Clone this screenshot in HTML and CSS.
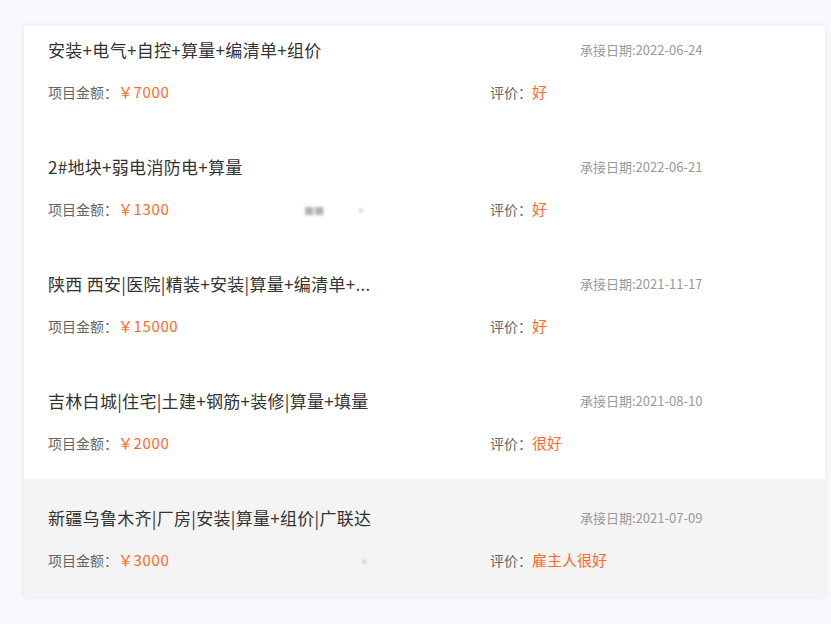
FILE: index.html
```html
<!DOCTYPE html>
<html lang="zh-CN">
<head>
<meta charset="utf-8">
<title>承接项目</title>
<link rel="stylesheet" href="styles.css">
</head>
<body>
<div class="page">
  <div class="card">
    <div class="row">
      <div class="line top">
        <div class="title">安装+电气+自控+算量+编清单+组价</div>
        <div class="date">承接日期:2022-06-24</div>
      </div>
      <div class="line bottom">
        <div class="amount">项目金额：<span class="money">￥7000</span></div>
        <div class="rate">评价：<span class="money">好</span></div>
      </div>
    </div>
    <div class="row">
      <div class="line top">
        <div class="title">2#地块+弱电消防电+算量</div>
        <div class="date">承接日期:2022-06-21</div>
      </div>
      <div class="line bottom">
        <div class="amount">项目金额：<span class="money">￥1300</span><span class="smudge s1">■■</span><span class="smudge s2">▪</span></div>
        <div class="rate">评价：<span class="money">好</span></div>
      </div>
    </div>
    <div class="row">
      <div class="line top">
        <div class="title">陕西 西安|医院|精装+安装|算量+编清单+...</div>
        <div class="date">承接日期:2021-11-17</div>
      </div>
      <div class="line bottom">
        <div class="amount">项目金额：<span class="money">￥15000</span></div>
        <div class="rate">评价：<span class="money">好</span></div>
      </div>
    </div>
    <div class="row">
      <div class="line top">
        <div class="title">吉林白城|住宅|土建+钢筋+装修|算量+填量</div>
        <div class="date">承接日期:2021-08-10</div>
      </div>
      <div class="line bottom">
        <div class="amount">项目金额：<span class="money">￥2000</span></div>
        <div class="rate">评价：<span class="money">很好</span></div>
      </div>
    </div>
    <div class="row active">
      <div class="line top">
        <div class="title">新疆乌鲁木齐|厂房|安装|算量+组价|广联达</div>
        <div class="date">承接日期:2021-07-09</div>
      </div>
      <div class="line bottom">
        <div class="amount">项目金额：<span class="money">￥3000</span><span class="smudge s3">▪</span></div>
        <div class="rate">评价：<span class="money">雇主人很好</span></div>
      </div>
    </div>
  </div>
</div>
</body>
</html>
```

FILE: styles.css
```css
* { box-sizing: border-box; }
html, body { margin: 0; padding: 0; }
body {
  background: #f8f9fc;
  font-family: "Noto Sans CJK SC", "Noto Sans", sans-serif;
  width: 831px;
  height: 624px;
  overflow: hidden;
}
.page {
  padding: 26px 5px 0 24px;
}
.card {
  width: 801px;
  background: #ffffff;
  box-shadow: 0 0 6px rgba(0, 0, 0, 0.09);
}
.row {
  padding: 26px 24px 27px 24px;
}
.row:first-child { padding-top: 11px; }
.row.active {
  background: #f4f4f4;
  padding-bottom: 28px;
}
.line {
  display: grid;
  align-items: center;
}
.line.top {
  grid-template-columns: 532px auto;
  height: 24px;
}
.line.bottom {
  grid-template-columns: 442px auto;
  height: 20px;
  margin-top: 20px;
}
.title {
  font-size: 17px;
  color: #333333;
  white-space: nowrap;
  letter-spacing: 0.3px;
}
.date {
  font-size: 13px;
  color: #999999;
  white-space: nowrap;
}
.amount, .rate {
  font-size: 14px;
  color: #666666;
  white-space: nowrap;
}
.money {
  color: #ff6a2b;
  font-size: 15px;
  letter-spacing: 0.6px;
}
.rate .money { letter-spacing: 0; }
.smudge {
  color: #8a8f99;
  filter: blur(1.5px);
  font-size: 10px;
  opacity: 0.7;
  letter-spacing: 0;
}
.s1 { margin-left: 135px; }
.s2 { margin-left: 32px; }
.s3 { margin-left: 190px; }
```
